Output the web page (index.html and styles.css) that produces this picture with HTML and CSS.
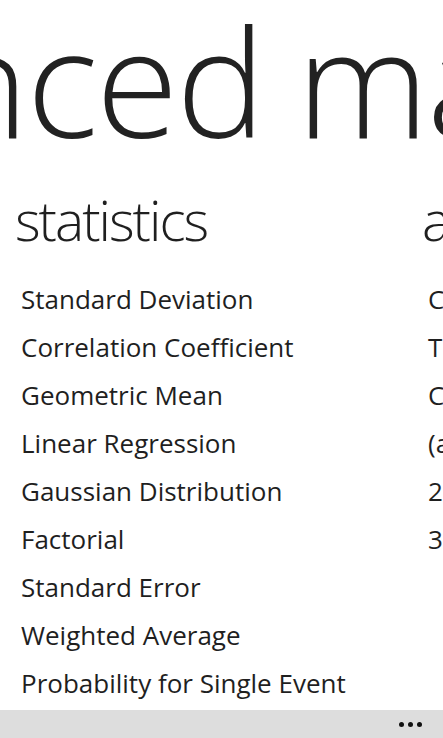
FILE: index.html
```html
<!DOCTYPE html>
<html>
<head>
<meta charset="utf-8">
<link rel="stylesheet" href="styles.css">
</head>
<body>
<div class="screen">
  <div class="panorama">
    <div class="title">advanced math</div>
    <div class="sections">
      <section class="section">
        <h2 class="header">statistics</h2>
        <ul class="items">
          <li>Standard Deviation</li>
          <li>Correlation Coefficient</li>
          <li>Geometric Mean</li>
          <li>Linear Regression</li>
          <li>Gaussian Distribution</li>
          <li>Factorial</li>
          <li>Standard Error</li>
          <li>Weighted Average</li>
          <li>Probability for Single Event</li>
        </ul>
      </section>
      <section class="section">
        <h2 class="header">algebra</h2>
        <ul class="items">
          <li>Cubic Equation</li>
          <li>Triangle Solver</li>
          <li>Complex Numbers</li>
          <li>(a+b)^n Expansion</li>
          <li>2x2 Linear System</li>
          <li>3x3 Linear System</li>
        </ul>
      </section>
    </div>
  </div>
  <div class="app-bar">
    <div class="more"><span></span><span></span><span></span></div>
  </div>
</div>
</body>
</html>
```
FILE: styles.css
```css
html, body {
  margin: 0;
  padding: 0;
  background: #ffffff;
}
.screen {
  width: 443px;
  height: 738px;
  display: flex;
  flex-direction: column;
  overflow: hidden;
  color: #1f1f1f;
  font-family: "Open Sans", "Liberation Sans", sans-serif;
}
.panorama {
  flex: 1;
  overflow: hidden;
}
.title {
  font-weight: 300;
  font-size: 150px;
  line-height: 150px;
  letter-spacing: -2px;
  word-spacing: -4px;
  white-space: nowrap;
  margin-top: 5px;
  margin-left: -369px;
  color: #222222;
}
.sections {
  display: flex;
  margin-top: 30px;
  padding-left: 15px;
}
.section {
  flex: 0 0 407px;
}
.header {
  margin: 0;
  font-weight: 300;
  font-size: 55px;
  line-height: 70px;
  letter-spacing: -2px;
  white-space: nowrap;
}
.items {
  list-style: none;
  margin: 20px 0 0 0;
  padding: 0 0 0 6px;
}
.items li {
  font-size: 26px;
  line-height: 48px;
  white-space: nowrap;
}
.app-bar {
  flex: 0 0 28px;
  background: #dddddd;
  display: flex;
  justify-content: flex-end;
  align-items: center;
}
.more {
  display: flex;
  gap: 4px;
  margin-right: 21px;
}
.more span {
  width: 5px;
  height: 5px;
  border-radius: 50%;
  background: #111111;
}
```
